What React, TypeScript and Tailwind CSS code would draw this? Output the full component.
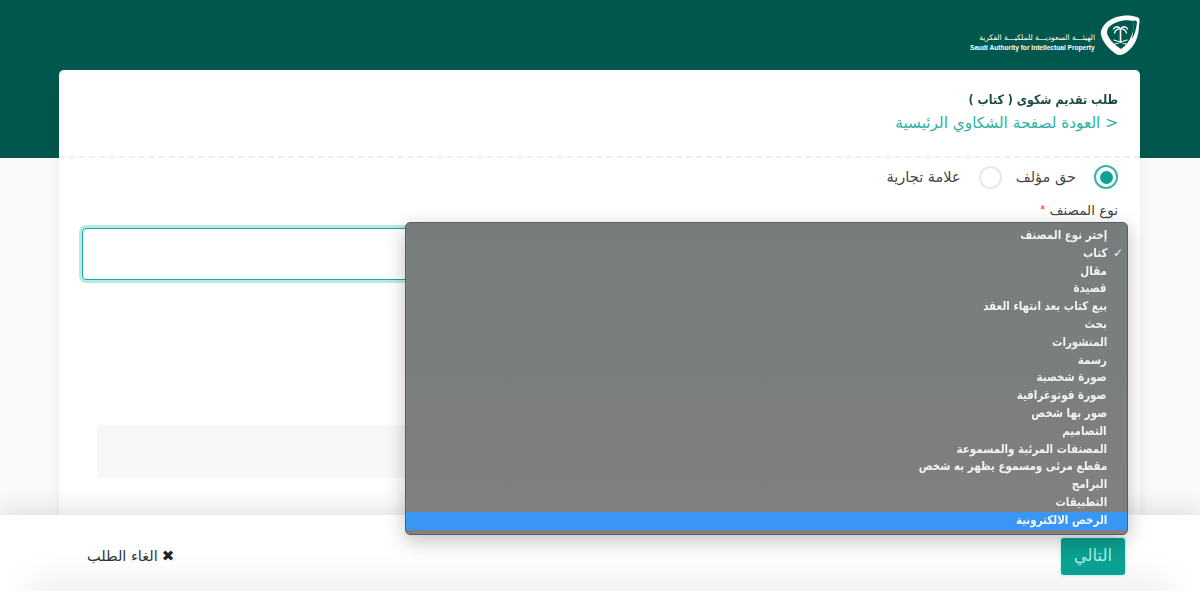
const options = [
  "إختر نوع المصنف",
  "كتاب",
  "مقال",
  "قصيدة",
  "بيع كتاب بعد انتهاء العقد",
  "بحث",
  "المنشورات",
  "رسمة",
  "صورة شخصية",
  "صورة فوتوغرافية",
  "صور بها شخص",
  "التصاميم",
  "المصنفات المرئية والمسموعة",
  "مقطع مرئى ومسموع يظهر به شخص",
  "البرامج",
  "التطبيقات",
  "الرخص الالكترونية",
];

function Logo() {
  return (
    <svg width="40" height="41" viewBox="0 0 40 41" aria-hidden="true">
      <path d="M7 7 C15 0 29 -1 37 2 C40 3 40 6 39 10 C39 21 35 31 27 37 C23 40 19 41 16 39 C10 35 3 28 1 20 C0 15 3 11 7 7 Z" fill="#ffffff" />
      <path d="M9 12 C15 6 26 4 33 6 C35 15 31 27 21 34 C14 30 8 23 7 18 C7 15 8 13 9 12 Z" fill="#00574c" />
      <path d="M33 6 C36 5 37 6 37 8 C36 14 35 19 32 24 C33 17 34 11 33 6 Z" fill="#00574c" />
      <g stroke="#ffffff" fill="none" strokeLinecap="round">
        <path d="M20.5 15 V26" strokeWidth="1.6" />
        <path d="M20.5 14 C18 11 15 11 13.5 14 M20.5 14 C23 11 26 11 27.5 14 M20.5 14 C18 13.5 15.5 15 14.5 18 M20.5 14 C23 13.5 25.5 15 26.5 18" strokeWidth="1.3" />
        <path d="M14 25 L26 29 M27 25 L15 29" strokeWidth="1.2" />
      </g>
    </svg>
  );
}

export default function App() {
  return (
    <div
      dir="rtl"
      className="relative flex h-[591px] w-[1200px] flex-col overflow-hidden bg-[#fafafa] text-[#333] [font-family:'DejaVu_Sans','Noto_Sans',sans-serif]"
    >
      <header className="flex h-[158px] shrink-0 justify-start gap-[5px] bg-[#00574c] pr-[60px] pt-[15px]">
        <Logo />
        <div className="mt-[18px] flex w-[125px] flex-col text-white" dir="ltr">
          <span dir="rtl" className="whitespace-nowrap text-right text-[7.5px] leading-[10px]">الهيئـــة السعوديـــة للملكيـــة الفكرية</span>
          <span className="whitespace-nowrap text-[6.6px] font-bold leading-[9px] [font-family:'Liberation_Sans',sans-serif]">Saudi Authority for Intellectual Property</span>
        </div>
      </header>

      <main className="-mt-[88px] flex-1 overflow-hidden pl-[59px] pr-[60px]">
        <div className="h-full rounded-t-[5px] bg-white shadow-[0_0_18px_rgba(0,0,0,0.05)]">
          <div className="h-[88px] border-b-2 border-dashed border-[#eeeeee] px-[22px] pt-[20px]">
            <h1 className="origin-right scale-x-[0.86] whitespace-nowrap text-[13px] font-bold leading-5 text-[#1c4a45]">طلب تقديم شكوى ( كتاب )</h1>
            <a className="mt-[1px] block text-[15.3px] leading-6 text-[#2fb0a4]">&lt; العودة لصفحة الشكاوي الرئيسية</a>
          </div>

          <div className="px-[22px]">
            <div className="mt-[7px] flex h-6 items-center">
              <span className="flex size-6 items-center justify-center rounded-full border-2 border-[#35b5a7] bg-white">
                <span className="size-[13px] rounded-full bg-[#0ba295]" />
              </span>
              <span className="mr-[18px] mt-[2px] text-[14.5px] text-[#444]">حق مؤلف</span>
              <span className="mr-[14px] size-[23px] rounded-full border-2 border-[#e8e8e8] bg-white" />
              <span className="mr-[18px] mt-[2px] text-[14.5px] text-[#444]">علامة تجارية</span>
            </div>

            <label className="mt-[11px] block text-[13.5px] leading-[20px] text-[#444]">
              نوع المصنف <span className="align-top text-[10px] text-[#d33]">*</span>
            </label>

            <div className="ml-[1px] mt-[8px] h-[52px] rounded-[4px] border border-[#1faaa0] bg-white shadow-[0_0_0_3px_rgba(21,190,175,0.3)]" />

            <div className="ml-[16px] mr-[15px] mt-[145px] h-[53px] bg-[#f7f7f7]" />
          </div>
        </div>
      </main>

      <footer className="relative z-10 flex h-[76px] shrink-0 items-start justify-between bg-white pl-[87px] pr-[75px] pt-[23px] shadow-[0_-8px_22px_rgba(0,0,0,0.1)]">
        <div className="absolute inset-x-[30px] -bottom-[14px] h-[28px] bg-[#efefef] blur-[14px]" />
        <button className="relative h-[37px] w-[64px] rounded-[3px] bg-[#0aa193] text-[16.5px] text-[#a9efe6] shadow-[0_0_3px_rgba(40,220,205,0.6)]">
          التالي
        </button>
        <button className="relative mt-[6px] flex items-center gap-[4px] text-[14.5px] leading-6 text-[#333]">
          <span className="text-[15px] font-bold text-[#222]">✖</span>
          <span>الغاء الطلب</span>
        </button>
      </footer>

      <div className="absolute left-[405px] top-[222px] z-20 h-[313px] w-[723px] overflow-hidden rounded-[5px] border border-[#5a5e5e] bg-gradient-to-b from-[#777d7d] to-[#808080] pt-[4px] shadow-[0_6px_20px_rgba(0,0,0,0.25)]">
        <ul className="text-[12px] font-bold text-[#f2f2f2]">
          {options.map((o, i) => (
            <li
              key={o}
              className={
                "relative h-[17.8px] whitespace-nowrap pr-[20px] leading-[17.8px] " +
                (i === options.length - 1 ? "bg-[#3a96f5] text-[#eef6ff]" : "")
              }
            >
              {i === 1 && <span className="absolute right-[4px] top-0 text-[12px] font-bold">✓</span>}
              <span className="inline-block origin-right scale-x-[0.86]">{o}</span>
            </li>
          ))}
        </ul>
      </div>
    </div>
  );
}
